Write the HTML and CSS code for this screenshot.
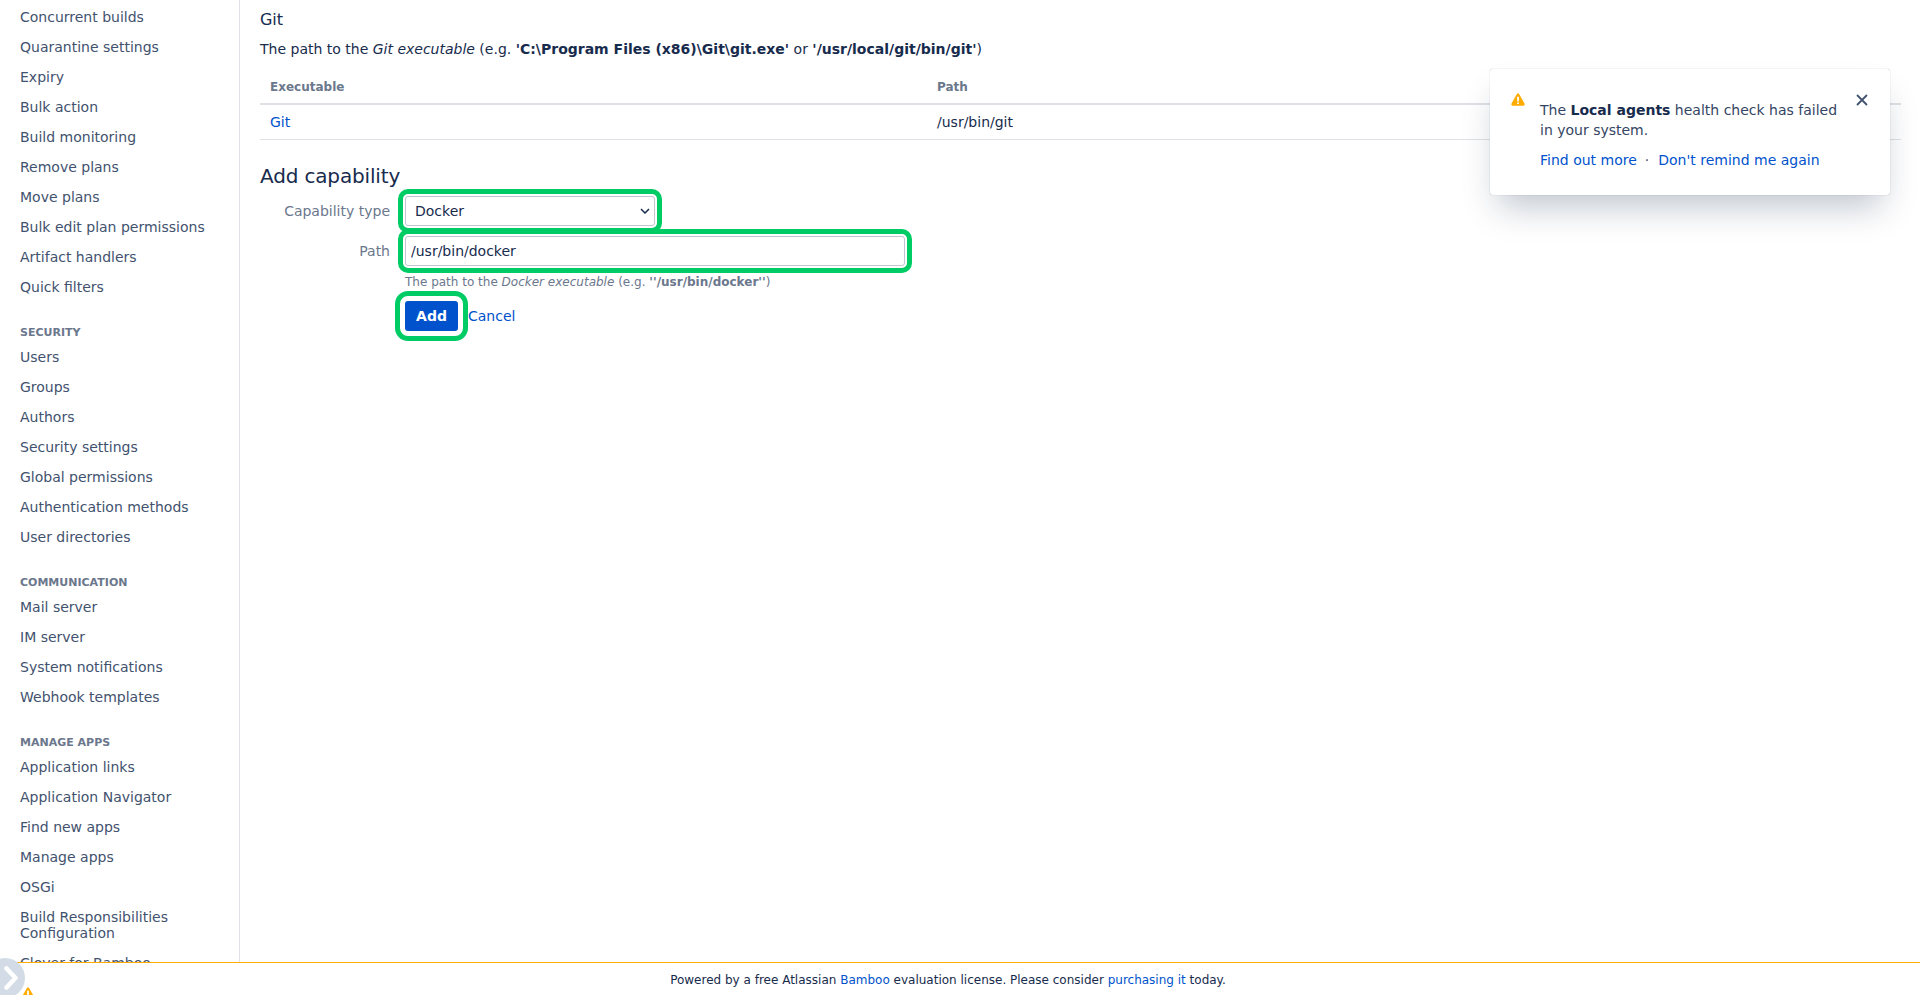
FILE: index.html
```html
<!DOCTYPE html>
<html lang="en">
<head>
<meta charset="utf-8">
<title>Agent capabilities</title>
<link rel="stylesheet" href="styles.css">
</head>
<body>
<div class="app">
  <div class="layout">
    <nav class="sidebar">
      <ul class="nav-list">
        <li><a href="#">Concurrent builds</a></li>
        <li><a href="#">Quarantine settings</a></li>
        <li><a href="#">Expiry</a></li>
        <li><a href="#">Bulk action</a></li>
        <li><a href="#">Build monitoring</a></li>
        <li><a href="#">Remove plans</a></li>
        <li><a href="#">Move plans</a></li>
        <li><a href="#">Bulk edit plan permissions</a></li>
        <li><a href="#">Artifact handlers</a></li>
        <li><a href="#">Quick filters</a></li>
      </ul>
      <h3 class="nav-heading">Security</h3>
      <ul class="nav-list">
        <li><a href="#">Users</a></li>
        <li><a href="#">Groups</a></li>
        <li><a href="#">Authors</a></li>
        <li><a href="#">Security settings</a></li>
        <li><a href="#">Global permissions</a></li>
        <li><a href="#">Authentication methods</a></li>
        <li><a href="#">User directories</a></li>
      </ul>
      <h3 class="nav-heading">Communication</h3>
      <ul class="nav-list">
        <li><a href="#">Mail server</a></li>
        <li><a href="#">IM server</a></li>
        <li><a href="#">System notifications</a></li>
        <li><a href="#">Webhook templates</a></li>
      </ul>
      <h3 class="nav-heading">Manage apps</h3>
      <ul class="nav-list">
        <li><a href="#">Application links</a></li>
        <li><a href="#">Application Navigator</a></li>
        <li><a href="#">Find new apps</a></li>
        <li><a href="#">Manage apps</a></li>
        <li><a href="#">OSGi</a></li>
        <li><a href="#">Build Responsibilities Configuration</a></li>
        <li><a href="#">Clover for Bamboo</a></li>
      </ul>
    </nav>
    <main class="content">
      <h2 class="cap-title">Git</h2>
      <p class="cap-desc">The path to the <em>Git executable</em> (e.g. <strong>'C:\Program Files (x86)\Git\git.exe'</strong> or <strong>'/usr/local/git/bin/git'</strong>)</p>
      <table class="cap-table">
        <thead>
          <tr><th class="col-exe">Executable</th><th>Path</th></tr>
        </thead>
        <tbody>
          <tr><td><a href="#">Git</a></td><td>/usr/bin/git</td></tr>
        </tbody>
      </table>
      <h2 class="form-title">Add capability</h2>
      <form class="cap-form">
        <label class="field-label" for="cap-type">Capability type</label>
        <div class="field">
          <div class="select-wrap ring">
            <select id="cap-type" class="select"><option>Docker</option></select>
            <svg class="select-arrow" viewBox="0 0 10 6" width="10" height="6" aria-hidden="true"><path d="M1 1l4 4 4-4" stroke="#172b4d" stroke-width="1.5" fill="none"/></svg>
          </div>
        </div>
        <label class="field-label" for="cap-path">Path</label>
        <div class="field">
          <input id="cap-path" class="text-input ring" type="text" value="/usr/bin/docker">
          <div class="help">The path to the <em>Docker executable</em> (e.g. <strong>''/usr/bin/docker''</strong>)</div>
        </div>
        <div class="actions">
          <button type="button" class="btn-primary">Add</button>
          <a href="#" class="cancel">Cancel</a>
        </div>
      </form>
    </main>
  </div>
  <footer class="footer">
    <p class="footer-text">Powered by a free Atlassian <a href="#">Bamboo</a> evaluation license. Please consider <a href="#">purchasing it</a> today.</p>
  </footer>
</div>

<aside class="flag">
  <svg class="flag-icon" viewBox="0 0 14 13" width="14" height="13" aria-hidden="true">
    <path d="M5.9 1.1 .5 10.6C0 11.6.6 12.7 1.7 12.7h10.6c1.1 0 1.7-1.1 1.2-2.1L8.1 1.1C7.6.1 6.4.1 5.9 1.1Z" fill="#ffab00"/>
    <rect x="6.1" y="3.6" width="1.8" height="5" rx=".9" fill="#fff"/>
    <circle cx="7" cy="10.3" r="1" fill="#fff"/>
  </svg>
  <div class="flag-body">
    <p class="flag-text">The <strong>Local agents</strong> health check has failed in your system.</p>
    <p class="flag-links"><a href="#">Find out more</a><span class="dot">·</span><a href="#">Don't remind me again</a></p>
  </div>
  <svg class="flag-close" viewBox="0 0 12 12" width="12" height="12" aria-hidden="true">
    <path d="M1.5 1.5l9 9M10.5 1.5l-9 9" stroke="#42526e" stroke-width="1.8" stroke-linecap="round" fill="none"/>
  </svg>
</aside>

<div class="collapse-btn">
  <svg viewBox="0 0 14 24" width="14" height="24" aria-hidden="true">
    <path d="M2.5 2.5 11.5 12 2.5 21.5" stroke="#fff" stroke-width="4.5" stroke-linecap="round" stroke-linejoin="round" fill="none"/>
  </svg>
</div>
<svg class="footer-warn" viewBox="0 0 14 13" width="14" height="13" aria-hidden="true">
  <path d="M5.9 1.1 .5 10.6C0 11.6.6 12.7 1.7 12.7h10.6c1.1 0 1.7-1.1 1.2-2.1L8.1 1.1C7.6.1 6.4.1 5.9 1.1Z" fill="#ffab00"/>
  <rect x="6.1" y="3.6" width="1.8" height="5" rx=".9" fill="#fff"/>
</svg>
</body>
</html>
```

FILE: styles.css
```css
* { box-sizing: border-box; }
html, body { margin: 0; height: 100%; overflow: hidden; }
body {
  font-family: "DejaVu Sans", sans-serif;
  font-size: 14px;
  line-height: 20px;
  color: #172b4d;
  background: #fff;
}
a { color: #0052cc; text-decoration: none; }
p, h2, h3, ul { margin: 0; padding: 0; }

.app { display: flex; flex-direction: column; height: 995px; }
.layout { display: flex; flex: 0 0 962px; height: 962px; overflow: hidden; }

.sidebar {
  flex: 0 0 240px;
  border-right: 1px solid #dfe1e6;
  padding-top: 2px;
}
.nav-list { list-style: none; }
.nav-list a {
  display: block;
  padding: 7px 20px;
  line-height: 16px;
  color: #42526e;
}
.nav-heading {
  margin-top: 20px;
  padding: 1px 20px 0;
  height: 20px;
  font-size: 11px;
  line-height: 20px;
  font-weight: 700;
  text-transform: uppercase;
  color: #6b778c;
}

.content { flex: 1; padding: 10px 19px 0 20px; min-width: 0; }
.cap-title { font-size: 16px; font-weight: 400; line-height: 20px; letter-spacing: -0.006em; }
.cap-desc { margin-top: 9px; color: #172b4d; }
.cap-table { width: 100%; margin-top: 10px; border-collapse: collapse; table-layout: fixed; }
.cap-table th {
  padding: 7px 10px 6px;
  height: 35px;
  font-size: 12px;
  font-weight: 700;
  line-height: 20px;
  text-align: left;
  color: #6b778c;
  border-bottom: 2px solid #dfe1e6;
}
.col-exe { width: 667px; }
.cap-table td {
  padding: 7px 10px;
  height: 35px;
  border-bottom: 1px solid #dfe1e6;
}
.form-title { margin-top: 22px; font-size: 20px; font-weight: 400; line-height: 28px; letter-spacing: -0.008em; }

.cap-form {
  display: grid;
  grid-template-columns: 130px 1fr;
  column-gap: 15px;
  margin-top: 6px;
}
.field-label { line-height: 30px; text-align: right; color: #6b778c; }
.field { margin-bottom: 10px; }
.ring { outline: 5px solid #00cc66; outline-offset: 2px; }
.select-wrap { position: relative; width: 250px; height: 30px; border-radius: 3px; }
.select, .text-input {
  display: block;
  height: 30px;
  border: 1px solid #c1c7d0;
  border-radius: 3px;
  background: #fff;
  color: #172b4d;
  font: 14px/20px "DejaVu Sans", sans-serif;
}
.select { width: 250px; padding: 0 24px 0 9px; appearance: none; }
.select-arrow { position: absolute; right: 5px; top: 12px; pointer-events: none; }
.text-input { width: 500px; padding: 0 5px; }
.help { margin-top: 6px; font-size: 12px; line-height: 20px; color: #6b778c; }
.help strong { font-weight: 700; }
.actions { grid-column: 2; display: flex; align-items: center; gap: 10px; margin-top: -1px; }
.btn-primary {
  height: 30px;
  width: 53px;
  padding: 0;
  border: 0;
  border-radius: 3px;
  background: #0052cc;
  color: #fff;
  font: 700 14px/20px "DejaVu Sans", sans-serif;
  outline: 5px solid #00cc66;
  outline-offset: 5px;
}

.footer { flex: 0 0 33px; border-top: 1px solid #ffab00; padding-right: 24px; background: #fff; }
.footer-text { font-size: 12px; line-height: 20px; padding-top: 7px; text-align: center; color: #172b4d; }

.flag {
  position: absolute;
  left: 1490px;
  top: 69px;
  width: 400px;
  height: 126px;
  background: #fff;
  border-radius: 3px;
  box-shadow: 0 20px 32px -8px rgba(9, 30, 66, .25), 0 0 1px rgba(9, 30, 66, .4);
}
.flag-icon { position: absolute; left: 21px; top: 24px; }
.flag-body { position: absolute; left: 50px; top: 31px; width: 310px; color: #344563; }
.flag-body strong { color: #172b4d; }
.flag-links { margin-top: 10px; }
.dot { margin: 0 9px 0 8px; color: #42526e; }
.flag-close { position: absolute; left: 366px; top: 25px; }

.collapse-btn {
  position: absolute;
  left: -15px;
  top: 958px;
  width: 40px;
  height: 40px;
  border-radius: 50%;
  background: #d3dce6;
  display: flex;
  align-items: center;
  justify-content: flex-end;
  padding-right: 7px;
}
.footer-warn { position: absolute; left: 21px; top: 987px; }
```
